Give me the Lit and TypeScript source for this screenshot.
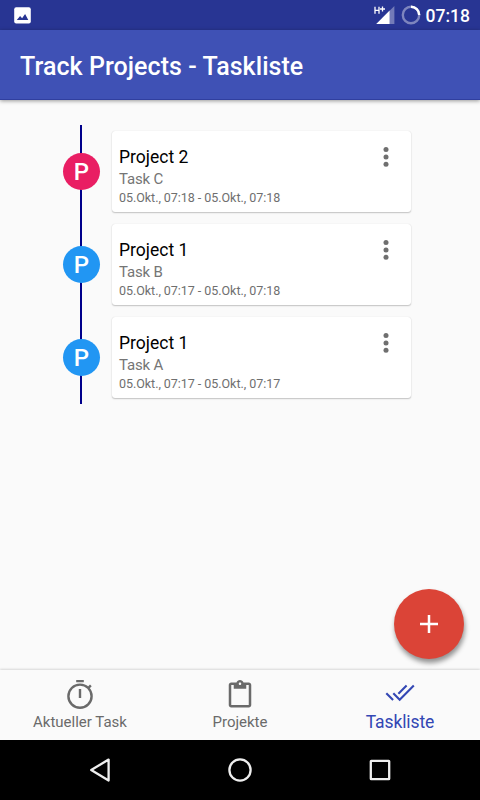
import { LitElement, html, css, svg } from "lit";
import { customElement } from "lit/decorators.js";
import { styleMap } from "lit/directives/style-map.js";

interface Entry {
  project: string;
  task: string;
  time: string;
  color: string;
}

const entries: Entry[] = [
  { project: "Project 2", task: "Task C", time: "05.Okt., 07:18 - 05.Okt., 07:18", color: "#e91e63" },
  { project: "Project 1", task: "Task B", time: "05.Okt., 07:17 - 05.Okt., 07:18", color: "#2196f3" },
  { project: "Project 1", task: "Task A", time: "05.Okt., 07:17 - 05.Okt., 07:17", color: "#2196f3" },
];

const timerIcon = svg`
  <circle cx="16" cy="17.2" r="11.6" fill="none" stroke="currentColor" stroke-width="2.4"/>
  <path d="M12.2 1h7.6v2.3h-7.6zM14.8 10h2.4v9h-2.4zM23.6 8l2.4-2.4 1.7 1.7-2.4 2.4z" fill="currentColor"/>`;

const clipboardIcon = svg`
  <g transform="translate(1 1) scale(1.25)">
    <path fill="currentColor" d="M19 2h-4.18C14.4.84 13.3 0 12 0c-1.3 0-2.4.84-2.82 2H5c-1.1 0-2 .9-2 2v16c0 1.1.9 2 2 2h14c1.1 0 2-.9 2-2V4c0-1.1-.9-2-2-2zm-7 0c.55 0 1 .45 1 1s-.45 1-1 1-1-.45-1-1 .45-1 1-1zm7 18H5V4h2v3h10V4h2v16z"/>
  </g>`;

const doneAllIcon = svg`
  <path fill="none" stroke="currentColor" stroke-width="2.1" d="M2.3 14.2l6.8 6.8M9.3 14.2l6.4 6.5L29.8 6.6M22.6 6.6l-8.2 8.2"/>`;

@customElement("app-root")
export class AppRoot extends LitElement {
  static styles = css`
    :host {
      display: flex;
      flex-direction: column;
      position: relative;
      width: 480px;
      height: 800px;
      overflow: hidden;
      background: #fafafa;
      font-family: Roboto, sans-serif;
    }
    svg { display: block; flex: none; }
    .status {
      height: 30px;
      flex: none;
      box-sizing: border-box;
      padding: 0 10px 0 14px;
      background: #283593;
      color: #fff;
      display: flex;
      align-items: center;
    }
    .signal { margin-left: auto; }
    .ring { margin: 0 5px 0 6px; }
    .clock { font-size: 17.5px; font-weight: 500; line-height: 30px; padding-top: 1px; }
    .bar {
      height: 70px;
      flex: none;
      padding: 2px 20px 0;
      box-sizing: border-box;
      background: #3f51b5;
      border-bottom: 1px solid #303f9f;
      box-shadow: 0 1px 4px rgba(0, 0, 0, 0.4);
      color: #fff;
      font-size: 25px;
      font-weight: 500;
      letter-spacing: 0.06px;
      line-height: 70px;
      z-index: 1;
    }
    .list { flex: 1; padding-top: 25px; }
    .row { display: flex; height: 93.15px; }
    .rail {
      width: 38px;
      margin-left: 62px;
      flex: none;
      display: flex;
      align-items: center;
      justify-content: flex-end;
      background: linear-gradient(#00008b, #00008b) 18px 0 / 2.4px 100% no-repeat;
    }
    .avatar {
      width: 37.2px;
      height: 37.2px;
      border-radius: 50%;
      color: #fff;
      font-size: 24px;
      font-weight: 500;
      line-height: 38px;
      text-align: center;
    }
    .card {
      width: 299px;
      height: 81px;
      margin: 6px 0 0 12px;
      box-sizing: border-box;
      padding: 16px 15.3px 0 7px;
      background: #fff;
      border-radius: 3px;
      box-shadow: 0 1px 1.5px rgba(0, 0, 0, 0.22), 0 0 1px rgba(0, 0, 0, 0.15);
      display: flex;
      justify-content: space-between;
    }
    .project { font-size: 17.5px; line-height: 20px; color: #000; }
    .task { font-size: 15px; line-height: 22px; margin-top: 1px; color: #757575; letter-spacing: -0.15px; }
    .time { font-size: 12.5px; line-height: 16px; color: #6f6f6f; white-space: nowrap; letter-spacing: -0.04px; }
    .fab {
      position: absolute;
      left: 394px;
      top: 589px;
      width: 70px;
      height: 70px;
      border-radius: 50%;
      background: #db4437;
      box-shadow: 1px 4px 5px rgba(0, 0, 0, 0.42);
      display: flex;
      align-items: center;
      justify-content: center;
    }
    .tabs {
      height: 70px;
      flex: none;
      display: flex;
      box-shadow: 0 -1px 2px rgba(0, 0, 0, 0.14);
    }
    .tab {
      flex: 1;
      display: flex;
      flex-direction: column;
      align-items: center;
      padding-top: 9px;
      color: #6a6a6a;
      font-size: 15px;
      line-height: 22px;
    }
    .active { color: #3347b4; font-size: 17.5px; letter-spacing: -0.1px; }
    .nav {
      height: 60px;
      flex: none;
      background: #000;
      display: flex;
      align-items: center;
      justify-content: center;
      gap: 108px;
    }
  `;

  private renderEntry(e: Entry) {
    return html`
      <div class="row">
        <div class="rail"><div class="avatar" style=${styleMap({ background: e.color })}>P</div></div>
        <div class="card">
          <div>
            <div class="project">${e.project}</div>
            <div class="task">${e.task}</div>
            <div class="time">${e.time}</div>
          </div>
          <svg width="20" height="20" viewBox="0 0 20 20" fill="#6f6f6f">
            <circle cx="10" cy="2.5" r="2.5"/><circle cx="10" cy="9.9" r="2.5"/><circle cx="10" cy="17.3" r="2.5"/>
          </svg>
        </div>
      </div>`;
  }

  private renderTab(icon: unknown, label: string, active = false) {
    return html`
      <div class="tab ${active ? "active" : ""}">
        <svg width="32" height="32" viewBox="0 0 32 32">${icon}</svg>
        <div>${label}</div>
      </div>`;
  }

  render() {
    return html`
      <div class="status">
        <svg width="17" height="17" viewBox="0 0 17 17">
          <rect x="0.2" y="0.2" width="16.6" height="16.2" rx="2" fill="#fff"/>
          <path d="M2.8 13l3.3-4.1 2 2.4 3-4.2 3.2 5.9z" fill="#283593"/>
        </svg>
        <svg class="signal" width="21" height="20" viewBox="0 0 21 20">
          <path d="M20.4 1v18h-5V6z" fill="#fff" opacity="0.35"/>
          <path d="M15.6 5.5V19H2.2z" fill="#fff"/>
          <path d="M1 1.8v7M5 1.8v7M1 5.3h4M6 4h5M8.5 1.5v5" stroke="#fff" stroke-width="1.3" fill="none"/>
        </svg>
        <svg class="ring" width="20" height="20" viewBox="0 0 20 20" fill="none" stroke="#fff" stroke-width="2.4">
          <circle cx="10" cy="10" r="8.2" opacity="0.4"/>
          <path d="M10 1.8a8.2 8.2 0 0 1 8.2 8.2"/>
        </svg>
        <div class="clock">07:18</div>
      </div>
      <div class="bar">Track Projects - Taskliste</div>
      <div class="list">${entries.map((e) => this.renderEntry(e))}</div>
      <div class="tabs">
        ${this.renderTab(timerIcon, "Aktueller Task")}
        ${this.renderTab(clipboardIcon, "Projekte")}
        ${this.renderTab(doneAllIcon, "Taskliste", true)}
      </div>
      <div class="nav">
        <svg width="32" height="32" viewBox="0 0 32 32"><path d="M24.6 5.6v21L7.2 16z" fill="none" stroke="#eee" stroke-width="2.3" stroke-linejoin="round"/></svg>
        <svg width="32" height="32" viewBox="0 0 32 32"><circle cx="16" cy="16" r="10.6" fill="none" stroke="#eee" stroke-width="2.3"/></svg>
        <svg width="32" height="32" viewBox="0 0 32 32"><rect x="6.8" y="6.8" width="18.4" height="18.4" rx="0.5" fill="none" stroke="#eee" stroke-width="2.3"/></svg>
      </div>
      <div class="fab">
        <svg width="18" height="18" viewBox="0 0 18 18"><path d="M9 0v18M0 9h18" stroke="#fff" stroke-width="2.5"/></svg>
      </div>`;
  }
}
